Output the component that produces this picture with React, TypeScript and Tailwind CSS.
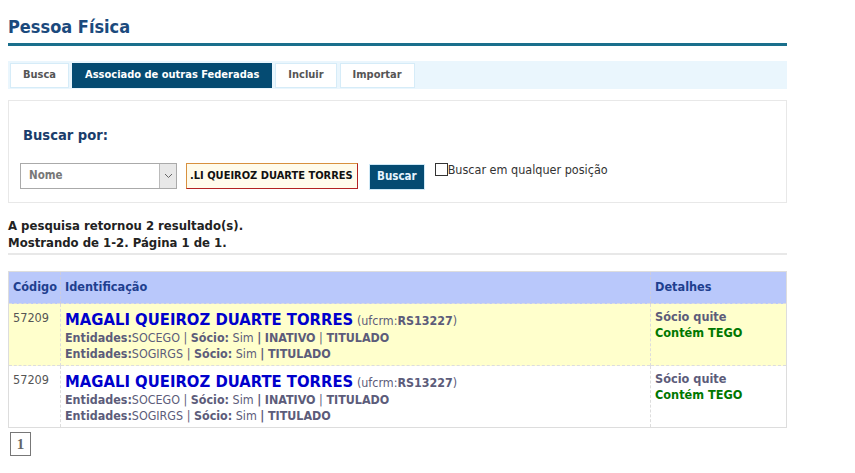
import React from "react";

const font = { fontFamily: '"DejaVu Sans Condensed", "DejaVu Sans", Verdana, sans-serif' };

const rows = [
  { code: "57209", bg: "bg-[#ffffcc]" },
  { code: "57209", bg: "bg-white" },
];

function Tab({ label, active }: { label: string; active?: boolean }) {
  return (
    <div
      className={
        active
          ? "flex h-[25px] items-center border border-[#054b72] bg-[#054b72] px-[12px] text-[11px] font-bold text-white"
          : "flex h-[25px] items-center border border-[#d6ecf8] bg-white px-[12px] text-[11px] font-bold text-[#555]"
      }
    >
      {label}
    </div>
  );
}

function Entidade({ name, inativo }: { name: string; inativo?: boolean }) {
  return (
    <div className="text-[12.4px] leading-[16px] text-[#5c5c7a]">
      <b>Entidades:</b>
      {name} | <b>Sócio:</b> Sim <b>|</b>
      {inativo && (
        <>
          {" "}
          <b>INATIVO</b> |
        </>
      )}{" "}
      <b>TITULADO</b>
    </div>
  );
}

export default function App() {
  return (
    <div className="min-h-[473px] bg-white text-[#222]" style={font}>
      <div className="w-[779px] ml-[8px] pt-[15px]">
        <h1 className="text-[18px] font-bold leading-[24px] text-[#1b4a7d]">Pessoa Física</h1>
        <div className="mt-[4px] h-[3px] bg-[#1a6f8c]" />

        <div className="mt-[15px] flex h-[28px] items-center gap-[3px] bg-[#eaf6fd] px-[2px]">
          <Tab label="Busca" />
          <Tab label="Associado de outras Federadas" active />
          <Tab label="Incluir" />
          <Tab label="Importar" />
        </div>

        <div className="mt-[11px] h-[103px] border border-[#e8e8e8] px-[11px] pt-[24px]">
          <div className="pl-[3px] text-[14.6px] font-bold leading-[20px] text-[#1a3d6b]">Buscar por:</div>
          <div className="mt-[18px] flex items-start">
            <div className="flex h-[26px] w-[157px] items-center justify-between border border-[#aaa] bg-white">
              <span className="pl-[8px] text-[11.5px] font-bold text-[#777]">Nome</span>
              <span className="flex h-full w-[17px] items-center justify-center border-l border-[#bbb] bg-[#e8e8e8]">
                <svg width="9" height="6" viewBox="0 0 9 6" fill="none" stroke="#666" strokeWidth="1">
                  <path d="M1 1l3.5 3.5L8 1" />
                </svg>
              </span>
            </div>
            <div className="ml-[9px] flex h-[26px] w-[172px] items-center overflow-hidden border border-t-[#d8913f] border-l-[#d8913f] border-b-[#b22222] border-r-[#b22222] bg-[#fffbeb]">
              <span className="whitespace-nowrap pl-[3px] text-[11px] font-bold text-[#111]">.LI QUEIROZ DUARTE TORRES</span>
            </div>
            <button className="ml-[11px] mt-[1px] h-[26px] border border-[#cfe9f7] bg-[#054b72] px-[7px] text-[11.5px] font-bold text-[#e8f4ff]">
              Buscar
            </button>
            <label className="ml-[10px] flex items-start text-[12.5px] leading-[14px] text-[#333]">
              <span className="inline-block h-[13px] w-[13px] border border-[#333] bg-white" />
              Buscar em qualquer posição
            </label>
          </div>
        </div>

        <div className="mt-[14px] text-[13px] font-bold leading-[17px] text-[#222]">
          <div>A pesquisa retornou 2 resultado(s).</div>
          <div>Mostrando de 1-2. Página 1 de 1.</div>
        </div>
        <div className="mt-[2px] h-[2px] bg-[#e8e8e8]" />

        <table className="mt-[16px] w-full table-fixed border-collapse border border-[#ddd] text-[12.6px]">
          <thead>
            <tr className="h-[32px] bg-[#b9c8fb] text-left text-[#1f3f8f]">
              <th className="w-[52px] border-r border-dashed border-[#ccd] px-[4px] font-bold">Código</th>
              <th className="px-[4px] font-bold">Identificação</th>
              <th className="w-[136px] border-l border-dashed border-[#ccd] px-[4px] font-bold">Detalhes</th>
            </tr>
          </thead>
          <tbody>
            {rows.map((r, i) => (
              <tr key={i} className={`${r.bg} h-[62px] border-t border-dashed border-[#ddd] align-top`}>
                <td className="border-r border-dashed border-[#ddd] px-[4px] pt-[5px] text-[#555]">{r.code}</td>
                <td className="px-[4px] pt-[7px]">
                  <div className="leading-[18px]">
                    <span className="text-[16.5px] font-bold text-[#0000cc]">MAGALI QUEIROZ DUARTE TORRES</span>{" "}
                    <span className="text-[12.4px] text-[#5c5c7a]">
                      (ufcrm:<b>RS13227</b>)
                    </span>
                  </div>
                  <Entidade name="SOCEGO" inativo />
                  <Entidade name="SOGIRGS" />
                </td>
                <td className="border-l border-dashed border-[#ddd] px-[4px] pt-[5px] leading-[16px]">
                  <div className="font-bold text-[#5c5c7a]">Sócio quite</div>
                  <div className="font-bold text-[#007700]">Contém TEGO</div>
                </td>
              </tr>
            ))}
          </tbody>
        </table>

        <div className="mt-[4px] ml-[2px] flex h-[24px] w-[21px] items-center justify-center border border-[#777] text-[15px] font-bold text-[#666]" style={{ fontFamily: '"Liberation Serif", serif' }}>
          1
        </div>
      </div>
    </div>
  );
}
